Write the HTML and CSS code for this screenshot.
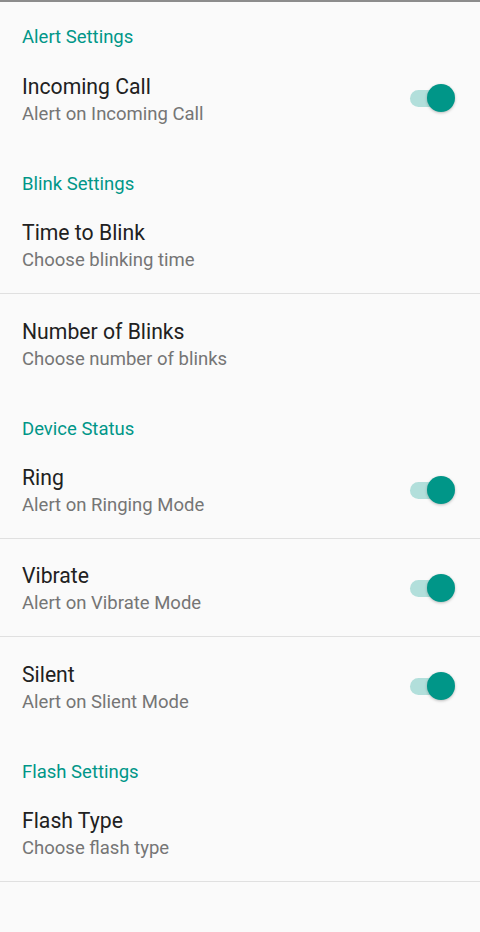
FILE: index.html
```html
<!DOCTYPE html>
<html lang="en">
<head>
<meta charset="utf-8">
<title>Settings</title>
<link rel="stylesheet" href="styles.css">
</head>
<body>
<div class="screen">
  <div class="category">Alert Settings</div>
  <div class="pref">
    <div class="pref-text"><div class="title">Incoming Call</div><div class="summary">Alert on Incoming Call</div></div>
    <div class="switch on"><span class="track"></span><span class="thumb"></span></div>
  </div>

  <div class="category">Blink Settings</div>
  <div class="pref divided">
    <div class="pref-text"><div class="title">Time to Blink</div><div class="summary">Choose blinking time</div></div>
  </div>
  <div class="pref">
    <div class="pref-text"><div class="title">Number of Blinks</div><div class="summary">Choose number of blinks</div></div>
  </div>

  <div class="category">Device Status</div>
  <div class="pref divided">
    <div class="pref-text"><div class="title">Ring</div><div class="summary">Alert on Ringing Mode</div></div>
    <div class="switch on"><span class="track"></span><span class="thumb"></span></div>
  </div>
  <div class="pref divided">
    <div class="pref-text"><div class="title">Vibrate</div><div class="summary">Alert on Vibrate Mode</div></div>
    <div class="switch on"><span class="track"></span><span class="thumb"></span></div>
  </div>
  <div class="pref">
    <div class="pref-text"><div class="title">Silent</div><div class="summary">Alert on Slient Mode</div></div>
    <div class="switch on"><span class="track"></span><span class="thumb"></span></div>
  </div>

  <div class="category">Flash Settings</div>
  <div class="pref divided">
    <div class="pref-text"><div class="title">Flash Type</div><div class="summary">Choose flash type</div></div>
  </div>
</div>
</body>
</html>
```
FILE: styles.css
```css
html, body {
  margin: 0;
  padding: 0;
  background: #fafafa;
}
body {
  font-family: Roboto, "Noto Sans", "Liberation Sans", sans-serif;
  width: 480px;
  height: 932px;
  overflow: hidden;
}
.screen {
  border-top: 2px solid #8c8c8c;
  min-height: 930px;
  background: #fafafa;
}
.category {
  color: #009688;
  font-size: 18.5px;
  line-height: 24px;
  height: 49px;
  box-sizing: border-box;
  padding: 25px 22px 0;
}
.category:first-child {
  height: 47px;
  padding-top: 23px;
}
.pref {
  display: flex;
  align-items: center;
  justify-content: space-between;
  height: 98px;
  box-sizing: border-box;
  padding: 0 25px 0 22px;
}
.pref.divided {
  border-bottom: 1px solid #e0e0e0;
}
.pref-text {
  display: flex;
  flex-direction: column;
  padding-top: 4px;
}
.title {
  color: #212121;
  font-size: 21.2px;
  line-height: 27px;
}
.summary {
  color: #757575;
  font-size: 18.5px;
  line-height: 27px;
  margin-top: 1px;
}
.switch {
  position: relative;
  width: 45px;
  height: 30px;
  flex: none;
}
.switch .track {
  position: absolute;
  left: 0;
  top: 7px;
  width: 43px;
  height: 17px;
  border-radius: 9px;
  background: #b2dfdb;
}
.switch .thumb {
  position: absolute;
  right: 0;
  top: 1px;
  width: 28px;
  height: 28px;
  border-radius: 50%;
  background: #009688;
  box-shadow: 0 1px 3px rgba(0,0,0,0.25);
}
```
